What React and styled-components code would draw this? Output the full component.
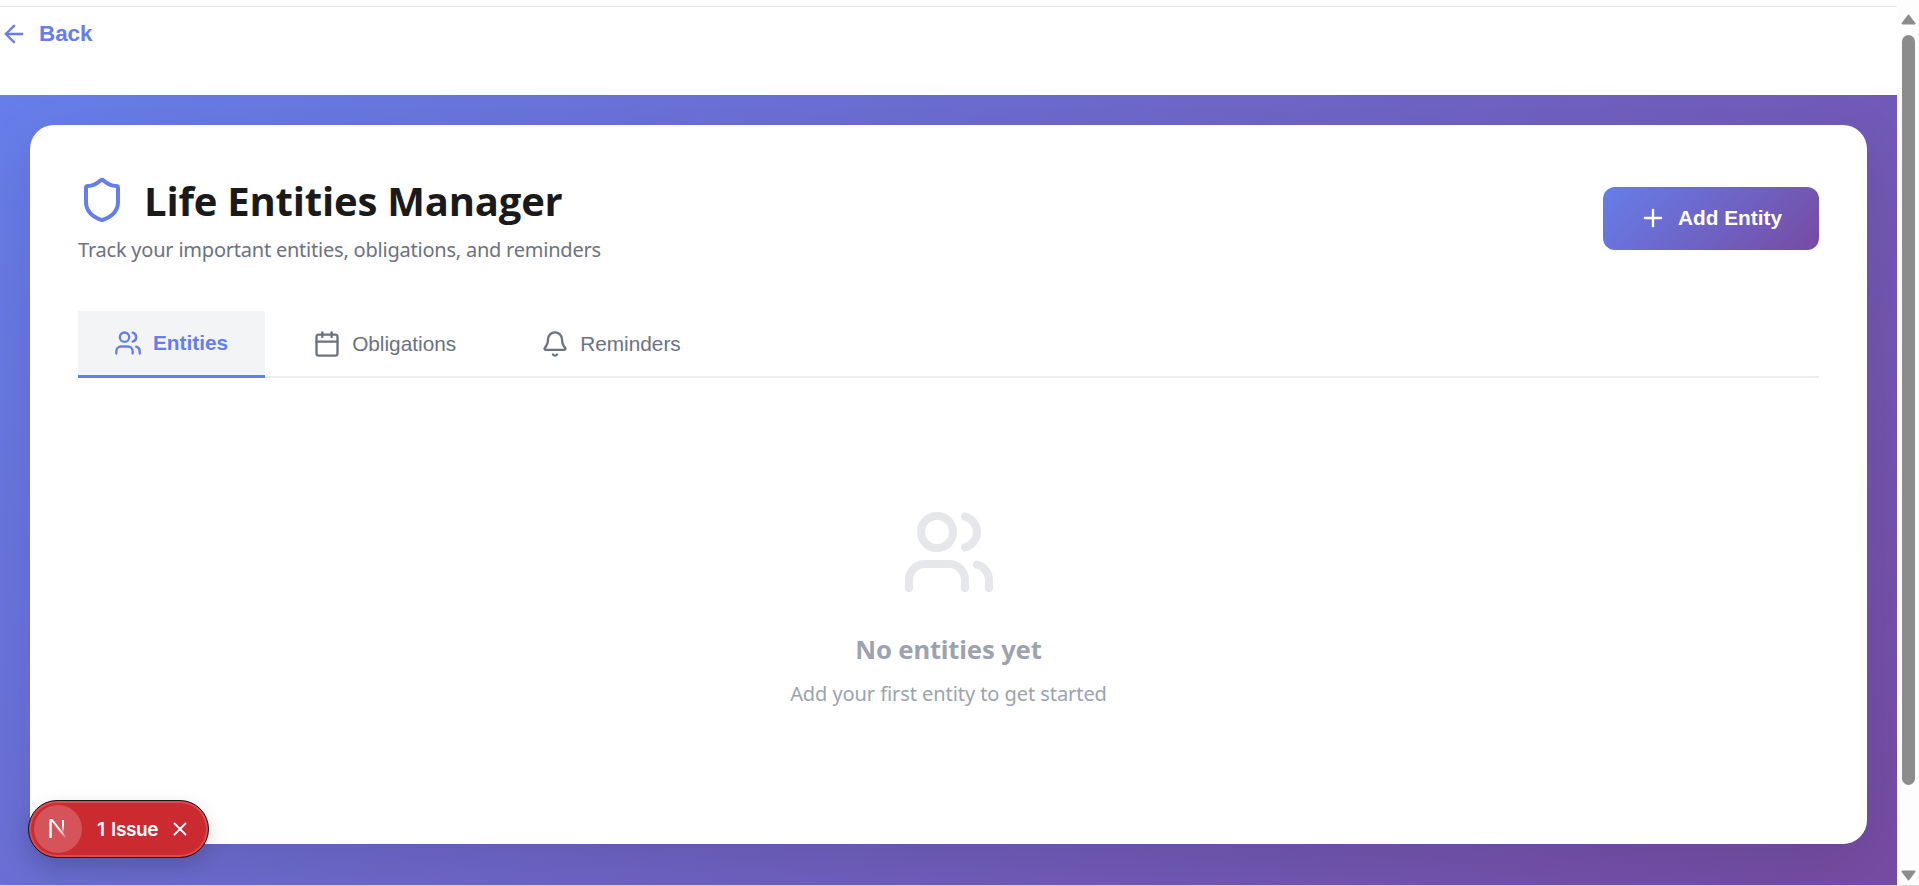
import React from 'react';
import styled, { createGlobalStyle } from 'styled-components';
import { ArrowLeft, Bell, Calendar, Plus, Shield, Users, X } from 'lucide-react';

const GlobalStyle = createGlobalStyle`
    * { box-sizing: border-box; }
    html, body { margin: 0; height: 100%; overflow: hidden; background: #fff; }
    #root { height: 100%; }
`;

const Window = styled.div`
    display: flex;
    height: 886px;
    position: relative;
    border-bottom: 1px solid #d9d9d9;
`;
const Page = styled.div`
    flex: 1;
    display: flex;
    flex-direction: column;
    min-width: 0;
    padding-top: 6px;
`;
const TopBar = styled.div`
    height: 89px;
    border-top: 1px solid #e5e7eb;
    padding-top: 7px;
`;
const BackLink = styled.a`
    display: inline-flex;
    align-items: center;
    gap: 11px;
    color: #667eea;
    font: 700 22.4px/40px "Liberation Sans", Arial, sans-serif;
`;
const Stage = styled.div`
    flex: 1;
    padding: 30px;
    background: linear-gradient(135deg, #667eea 0%, #764ba2 100%);
`;
const Card = styled.div`
    height: 719px;
    background: #fff;
    border-radius: 24px;
    padding: 48px;
    box-shadow: 0 20px 60px rgba(0, 0, 0, 0.1);
`;
const Header = styled.div`
    display: flex;
    justify-content: space-between;
    align-items: center;
    height: 138px;
    padding-bottom: 48px;
`;
const TitleRow = styled.div`
    display: flex;
    align-items: center;
    gap: 18px;
    color: #667eea;
`;
const Title = styled.h1`
    margin: 0;
    padding-top: 2px;
    color: #1a1a1a;
    font: 700 40px/54px "Open Sans", "Noto Sans", sans-serif;
    letter-spacing: -0.2px;
`;
const Subtitle = styled.p`
    margin: 8px 0 0;
    color: #6b7280;
    font: 400 20px/28px "Noto Sans", "Open Sans", sans-serif;
    letter-spacing: -0.22px;
`;
const AddButton = styled.button`
    display: flex;
    align-items: center;
    gap: 11px;
    width: 216px;
    height: 63px;
    padding: 0 36px;
    border: none;
    border-radius: 12px;
    color: #fff;
    background: linear-gradient(135deg, #667eea 0%, #764ba2 100%);
    font: 700 20.8px "Liberation Sans", Arial, sans-serif;
    white-space: nowrap;
`;
const Tabs = styled.div`
    display: flex;
    gap: 12px;
    height: 67px;
    border-bottom: 2px solid #eceef1;
`;
const Tab = styled.button`
    display: flex;
    align-items: center;
    gap: 11px;
    height: 67px;
    padding: ${p => (p.$active ? '0' : '1px')} 37px 0 36px;
    border: none;
    border-bottom: 3px solid ${p => (p.$active ? '#667eea' : 'transparent')};
    color: ${p => (p.$active ? '#667eea' : '#6b7280')};
    background: ${p => (p.$active ? '#f3f4f6' : 'transparent')};
    font: ${p => (p.$active ? 700 : 400)} 20.8px "Liberation Sans", Arial, sans-serif;
`;
const Empty = styled.div`
    display: flex;
    flex-direction: column;
    align-items: center;
    padding-top: 126px;
    color: #e5e7eb;
`;
const EmptyTitle = styled.h3`
    margin: 32px 0 0;
    color: #9ca3af;
    font: 700 25.6px/36px "Noto Sans", "Open Sans", sans-serif;
    letter-spacing: -0.15px;
`;
const EmptyText = styled.p`
    margin: 12px 0 0;
    color: #9ca3af;
    font: 400 20px/28px "Noto Sans", "Open Sans", sans-serif;
    letter-spacing: -0.07px;
`;
const IssuePill = styled.div`
    position: absolute;
    left: 28px;
    top: 800px;
    display: flex;
    align-items: center;
    width: 181px;
    height: 58px;
    padding: 5px;
    border-radius: 29px;
    border: 1px solid #171717;
    box-shadow: inset 0 0 0 2px #dc4a4f, 0 8px 20px rgba(0, 0, 0, 0.15);
    background: #ca2a30;
    color: #fff;
`;
const LogoBadge = styled.div`
    display: flex;
    align-items: center;
    justify-content: center;
    width: 48px;
    height: 48px;
    border-radius: 50%;
    background: rgba(255, 255, 255, 0.2);
`;
const IssueLabel = styled.span`
    margin: 0 11px 0 15px;
    font: 600 19px "Inter", sans-serif;
    letter-spacing: -0.4px;
    word-spacing: 2px;
`;
const ScrollBar = styled.div`
    display: flex;
    flex-direction: column;
    align-items: center;
    width: 22px;
    padding-top: 14px;
    color: #8c8c8c;
    background: #fdfdfd;
`;
const Thumb = styled.div`
    width: 13px;
    height: 750px;
    margin-top: 10px;
    border-radius: 7px;
    background: #8c8c8c;
`;
const ArrowIcon = styled.svg`
    width: 15px;
    height: 11px;
    margin-top: ${p => (p.$bottom ? 'auto' : '0')};
    margin-bottom: ${p => (p.$bottom ? '4px' : '0')};
`;

const NextMark = () => (
    <svg width="20" height="20" viewBox="0 0 20 20" fill="none">
        <defs>
            <linearGradient id="markDiag" x1="4" y1="3" x2="18" y2="19" gradientUnits="userSpaceOnUse">
                <stop offset="0.55" stopColor="#fff" />
                <stop offset="1" stopColor="#fff" stopOpacity="0" />
            </linearGradient>
            <linearGradient id="markStem" x1="15" y1="1" x2="15" y2="14" gradientUnits="userSpaceOnUse">
                <stop offset="0.4" stopColor="#fff" />
                <stop offset="1" stopColor="#fff" stopOpacity="0" />
            </linearGradient>
        </defs>
        <path d="M2.5 19V1H4L18 19" stroke="url(#markDiag)" strokeWidth="2" />
        <path d="M2.5 19V1" stroke="#fff" strokeWidth="2" />
        <path d="M15 1V14" stroke="url(#markStem)" strokeWidth="2" />
    </svg>
);

const App = () => {
    return (
        <Window>
            <GlobalStyle />
            <Page>
                <TopBar>
                    <BackLink><ArrowLeft size={28} />Back</BackLink>
                </TopBar>
                <Stage>
                    <Card>
                        <Header>
                            <div>
                                <TitleRow>
                                    <Shield size={48} />
                                    <Title>Life Entities Manager</Title>
                                </TitleRow>
                                <Subtitle>Track your important entities, obligations, and reminders</Subtitle>
                            </div>
                            <AddButton><Plus size={28} />Add Entity</AddButton>
                        </Header>
                        <Tabs>
                            <Tab $active><Users size={28} />Entities</Tab>
                            <Tab><Calendar size={28} />Obligations</Tab>
                            <Tab><Bell size={28} />Reminders</Tab>
                        </Tabs>
                        <Empty>
                            <Users size={96} />
                            <EmptyTitle>No entities yet</EmptyTitle>
                            <EmptyText>Add your first entity to get started</EmptyText>
                        </Empty>
                    </Card>
                </Stage>
            </Page>
            <ScrollBar>
                <ArrowIcon viewBox="0 0 15 11">
                    <path d="M7.5 1.5 L13.5 9.5 H1.5 Z" fill="currentColor" stroke="currentColor" strokeWidth="2" strokeLinejoin="round" />
                </ArrowIcon>
                <Thumb />
                <ArrowIcon $bottom viewBox="0 0 15 11">
                    <path d="M1.5 1.5 H13.5 L7.5 9.5 Z" fill="currentColor" stroke="currentColor" strokeWidth="2" strokeLinejoin="round" />
                </ArrowIcon>
            </ScrollBar>
            <IssuePill>
                <LogoBadge><NextMark /></LogoBadge>
                <IssueLabel>1 Issue</IssueLabel>
                <X size={22} />
            </IssuePill>
        </Window>
    );
};

export default App;
